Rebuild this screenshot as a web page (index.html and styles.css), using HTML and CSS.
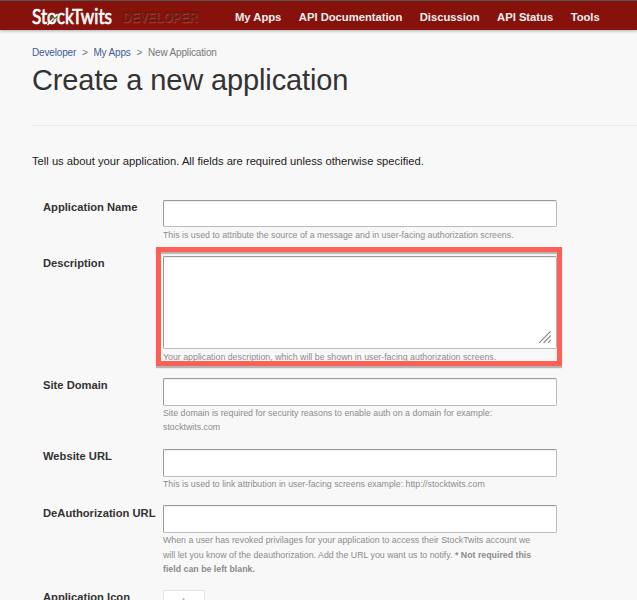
FILE: index.html
```html
<!DOCTYPE html>
<html lang="en">
<head>
<meta charset="utf-8">
<title>Create a new application</title>
<link rel="stylesheet" href="styles.css">
</head>
<body>
<header class="topbar">
  <svg class="logo" width="174" height="27" viewBox="0 0 174 27" role="img" aria-label="StockTwits Developer">
    <text class="logo-name" x="0" y="20.5" textLength="80" lengthAdjust="spacingAndGlyphs">StockTwits</text>
    <path class="logo-slash" d="M15.5 22 25.5 11"/>
    <path class="logo-spark" d="m18 15 3-1.2 1.5 1.8 3-2"/>
    <text class="logo-sub" x="90.5" y="19" textLength="75" lengthAdjust="spacingAndGlyphs">DEVELOPER</text>
  </svg>
  <nav class="nav">
    <a>My Apps</a><a>API Documentation</a><a>Discussion</a><a>API Status</a><a>Tools</a>
  </nav>
</header>
<main class="page">
  <div class="crumbs"><a>Developer</a><span class="sep">&gt;</span><a>My Apps</a><span class="sep">&gt;</span><span>New Application</span></div>
  <h1>Create a new application</h1>
  <p class="intro">Tell us about your application. All fields are required unless otherwise specified.</p>
  <form class="form">
    <div class="row name"><label>Application Name</label><div class="field"><input type="text"><p class="help">This is used to attribute the source of a message and in user-facing authorization screens.</p></div></div>
    <div class="row desc"><label>Description</label><div class="field"><div class="area"><svg class="grip" width="12" height="12" viewBox="0 0 12 12"><path d="M0 12 12 0M4.5 12 12 4.5M9 12l3-3"/></svg></div><p class="help">Your application description, which will be shown in user-facing authorization screens.</p><div class="highlight"></div></div></div>
    <div class="row domain"><label>Site Domain</label><div class="field"><input type="text"><p class="help">Site domain is required for security reasons to enable auth on a domain for example:<br>stocktwits.com</p></div></div>
    <div class="row site"><label>Website URL</label><div class="field"><input type="text"><p class="help">This is used to link attribution in user-facing screens example: http://stocktwits.com</p></div></div>
    <div class="row deauth"><label>DeAuthorization URL</label><div class="field"><input type="text"><p class="help">When a user has revoked privilages for your application to access their StockTwits account we<br>will let you know of the deauthorization. Add the URL you want us to notify. <b>* Not required this<br>field can be left blank.</b></p></div></div>
    <div class="row icon"><label>Application Icon</label><div class="field"><div class="thumb"><svg width="40" height="9" viewBox="0 0 40 9"><path d="M18.5 7 20.5 7.5V9h-2z"/></svg></div></div></div>
  </form>
</main>
</body>
</html>
```
FILE: styles.css
```css
* { box-sizing: border-box; }
html, body { margin: 0; height: 600px; overflow: hidden; }
body { background: #f8f8f8; color: #222; font-family: "Liberation Sans", Arial, sans-serif; }
.topbar { display: flex; height: 30px; padding-left: 32px; background: #87120b; border-top: 1px solid #555; box-shadow: 0 1px 3px rgba(0,0,0,.3); }
.logo { margin-top: 2px; flex: none; }
.logo-name { fill: #fff; stroke: #fff; stroke-width: .7; font: 400 21px Lato, sans-serif; }
.logo-slash { stroke: #fff; stroke-width: 1.3; fill: none; }
.logo-spark { stroke: #3d7c2c; stroke-width: 1.3; fill: none; }
.logo-sub { fill: #64130c; stroke: #5c120a; stroke-width: .4; font: 700 14px "Liberation Sans", sans-serif; text-shadow: 1px 1px 0 #a5403a; }
.nav { display: flex; gap: 17.5px; margin-left: 29px; font-size: 11.25px; letter-spacing: -.02px; font-weight: 700; line-height: 32px; color: #eee; white-space: nowrap; }
.page { padding-left: 32px; }
.crumbs { display: flex; height: 33px; padding-top: 16px; font-size: 10px; line-height: 14px; letter-spacing: -.16px; color: #777; white-space: nowrap; }
.crumbs a { color: #3b5b98; }
.sep { margin: 0 5.8px; }
h1 { height: 63px; margin: 0; border-bottom: 1px solid #eaeaea; font-size: 29px; font-weight: 400; line-height: 34px; letter-spacing: -.12px; color: #333; }
.intro { height: 74px; margin: 0; padding-top: 27px; font-size: 11.2px; line-height: 16px; }
.row { display: grid; grid-template-columns: 120px 394px; padding-left: 11px; white-space: nowrap; }
.name, .site { height: 56px; }
.desc { height: 122px; }
.domain { height: 71px; }
.deauth { height: 85px; }
.icon { height: 10px; }
label { font-size: 11.2px; font-weight: 700; line-height: 14px; color: #333; }
.deauth label { padding-top: 1px; }
.field { position: relative; }
input, .area { display: block; width: 394px; height: 28px; margin: 0; border: 1px solid #bbb; border-top-color: #999; border-left-color: #999; border-radius: 2px; background: #fff; box-shadow: inset 0 1px 1px #eee; }
.name input { height: 27px; }
.area { display: flex; justify-content: flex-end; align-items: flex-end; height: 93px; padding: 0 5px 5px 0; }
.grip { fill: none; stroke: #8a8a8a; stroke-width: 1.2; }
.help { margin: 0; font-size: 8.8px; line-height: 14.5px; color: #8c8c8c; }
.name .help, .desc .help { padding-top: 1px; }
.domain .help { line-height: 14px; }
.highlight { position: absolute; left: -7px; top: -9px; width: 406px; height: 119px; border: 5px solid #ff6055; box-shadow: 0 2px 1px #b5b5b5, inset 0 2px 1px #b5b5b5; }
.thumb { width: 42px; height: 10px; border: 1px solid #e4e4e4; border-bottom: 0; background: #fff; }
.thumb svg { display: block; }
.thumb path { fill: #bbb; }
```
